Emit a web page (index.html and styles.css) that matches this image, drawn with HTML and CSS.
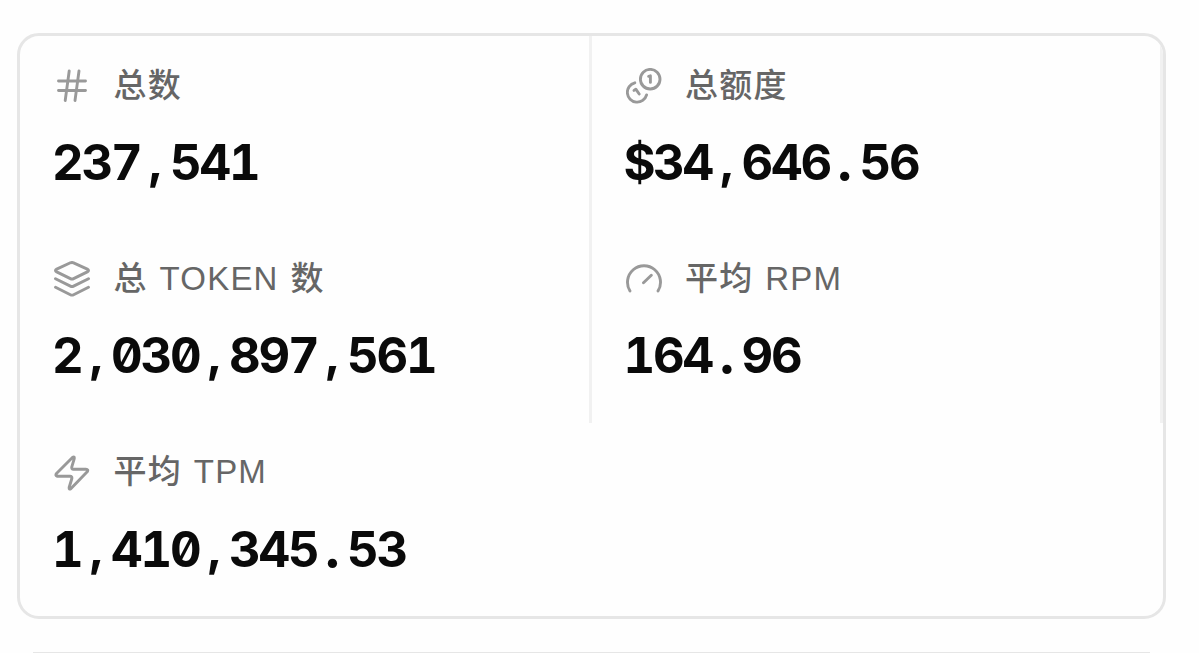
FILE: index.html
```
<!DOCTYPE html>
<html lang="zh-CN">
<head>
    <meta charset="UTF-8">
    <meta name="viewport" content="width=device-width, initial-scale=1.0">
    <title>统计</title>
    <link rel="stylesheet" href="styles.css">
</head>
<body>
    <div class="stats">
        <div class="stat">
            <div class="stat-label">
                <svg class="icon" viewBox="0 0 36 36">
                    <path d="M4.5 13H31.5M4.5 22.5H31.5M15.2 3L11.2 32.5M25 3L21 32.5"/>
                </svg>
                <span>总数</span>
            </div>
            <div class="stat-value">237<span class="sep">,</span>541</div>
        </div>
        <div class="stat">
            <div class="stat-label">
                <svg class="icon" viewBox="0 0 36 36">
                    <circle cx="24.2" cy="11.2" r="9.8"/>
                    <path d="M8.8 14.8A9.8 9.8 0 1 0 20.6 26.9"/>
                    <path d="M22.6 8.3L24.4 7.8V14.4M8 22.4L9.8 21.2L13.2 26"/>
                </svg>
                <span>总额度</span>
            </div>
            <div class="stat-value"><span class="currency">$</span>34<span class="sep">,</span>646<span class="sep dot">.</span>56</div>
        </div>
        <div class="stat">
            <div class="stat-label">
                <svg class="icon" viewBox="0 0 36 36">
                    <path d="M16.4 1.8Q18 1.1 19.6 1.8L33.3 8.1Q35.8 9.5 33.3 10.9L19.6 17.6Q18 18.4 16.4 17.6L2.7 10.9Q.2 9.5 2.7 8.1Z"/>
                    <path d="M1.5 17.7L16.4 25.1Q18 25.9 19.6 25.1L34.5 17.7M1.5 26.3L16.4 33.7Q18 34.5 19.6 33.7L34.5 26.3"/>
                </svg>
                <span>总 TOKEN 数</span>
            </div>
            <div class="stat-value">2<span class="sep">,</span>030<span class="sep">,</span>897<span class="sep">,</span>561</div>
        </div>
        <div class="stat">
            <div class="stat-label">
                <svg class="icon" viewBox="0 0 36 36">
                    <path d="M4 30A16.5 16.5 0 1 1 32 30M17.5 21.7L25.3 14.2"/>
                </svg>
                <span>平均 RPM</span>
            </div>
            <div class="stat-value">164<span class="sep dot">.</span>96</div>
        </div>
        <div class="stat">
            <div class="stat-label">
                <svg class="icon" viewBox="0 0 36 36">
                    <path d="M3.3 21.3Q.8 20.5 2.7 18.3L18.7 2.3Q20.7 1 20.2 3.8L17.8 11.8Q17.3 14.2 19.5 14.2H31.8Q34.8 14.5 33.2 16.8L16.8 33.7Q14.8 35 15.2 32.2L17.8 23.8Q18.3 21.3 16 21.3Z"/>
                </svg>
                <span>平均 TPM</span>
            </div>
            <div class="stat-value">1<span class="sep">,</span>410<span class="sep">,</span>345<span class="sep dot">.</span>53</div>
        </div>
    </div>
    <div class="panel"></div>
</body>
</html>
```
FILE: styles.css
```
* {
    box-sizing: border-box;
}
body {
    margin: 0;
    padding: 33px 33px 0 17px;
    height: 653px;
    overflow: hidden;
    background-color: #fefefe;
    font-family: "Liberation Sans", "Noto Sans CJK SC", sans-serif;
}
.stats {
    display: grid;
    grid-template-columns: 1fr 1fr;
    grid-template-rows: repeat(3, 1fr);
    height: 586px;
    border: 3px solid #e6e6e6;
    border-radius: 22px;
    overflow: hidden;
}
.stat {
    padding: 26px 34px 0;
    border-right: 3px solid #f1f1f1;
}
.stat:last-child {
    border-right: none;
}
.stat-label {
    display: flex;
    align-items: center;
    gap: 23.5px;
    height: 48px;
    font-size: 33px;
    font-weight: 500;
    letter-spacing: 1.2px;
    word-spacing: 1.5px;
    color: #666;
    white-space: nowrap;
}
.stat-label span {
    padding-bottom: 7px;
}
.icon {
    width: 36px;
    height: 36px;
    flex: none;
    fill: none;
    stroke: #999;
    stroke-width: 2.9;
    stroke-linecap: round;
    stroke-linejoin: round;
}
.stat-value {
    margin: 24px 0 0 -2px;
    font-family: Inter, sans-serif;
    font-variant-numeric: tabular-nums slashed-zero;
    font-size: 49px;
    line-height: 58px;
    font-weight: bold;
    letter-spacing: -2.15px;
    color: #0a0a0a;
    white-space: nowrap;
}
/* separators and the currency sign take a full digit cell */
.sep,
.currency {
    display: inline-block;
    width: 29.45px;
    text-align: center;
    letter-spacing: 0;
}
.sep {
    line-height: 1;
    vertical-align: 2px;
}
.dot {
    font-size: 55px;
    line-height: .8;
    vertical-align: baseline;
}
.panel {
    height: 1px;
    margin: 33px 16px 0;
    background-color: #e6e6e6;
}
```
